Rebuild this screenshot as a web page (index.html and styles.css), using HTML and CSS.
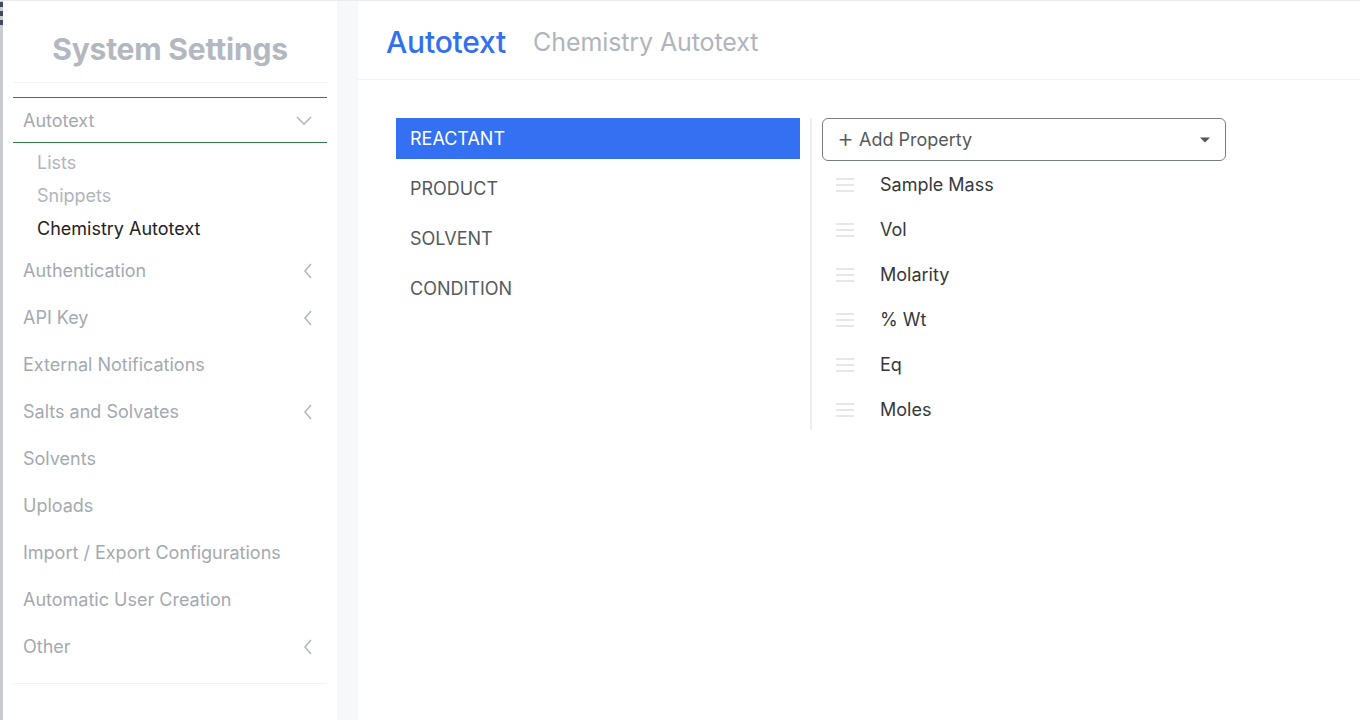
FILE: index.html
```html
<!DOCTYPE html>
<html>
<head>
<meta charset="utf-8">
<link rel="stylesheet" href="styles.css">
</head>
<body>
<div class="app">
  <div class="edge"><span></span><span></span><span></span></div>
  <aside class="sidebar">
    <h1 class="title">System Settings</h1>
    <div class="sep"></div>
    <nav class="nav">
      <div class="group open">
        <div class="item head">Autotext
          <svg class="chev" width="18" height="18" viewBox="0 0 18 18"><path d="M2 6l7 7 7-7" fill="none" stroke="#b4b8bf" stroke-width="1.6"/></svg>
        </div>
        <div class="subs">
          <div class="sub">Lists</div>
          <div class="sub">Snippets</div>
          <div class="sub active">Chemistry Autotext</div>
        </div>
      </div>
      <div class="item">Authentication<svg class="chev" width="14" height="18" viewBox="0 0 14 18"><path d="M10 2L4 9l6 7" fill="none" stroke="#b4b8bf" stroke-width="1.6"/></svg></div>
      <div class="item">API Key<svg class="chev" width="14" height="18" viewBox="0 0 14 18"><path d="M10 2L4 9l6 7" fill="none" stroke="#b4b8bf" stroke-width="1.6"/></svg></div>
      <div class="item">External Notifications</div>
      <div class="item">Salts and Solvates<svg class="chev" width="14" height="18" viewBox="0 0 14 18"><path d="M10 2L4 9l6 7" fill="none" stroke="#b4b8bf" stroke-width="1.6"/></svg></div>
      <div class="item">Solvents</div>
      <div class="item">Uploads</div>
      <div class="item">Import / Export Configurations</div>
      <div class="item">Automatic User Creation</div>
      <div class="item">Other<svg class="chev" width="14" height="18" viewBox="0 0 14 18"><path d="M10 2L4 9l6 7" fill="none" stroke="#b4b8bf" stroke-width="1.6"/></svg></div>
    </nav>
    <div class="sep bottom"></div>
  </aside>
  <div class="gap"></div>
  <main class="main">
    <header class="header">
      <span class="h-main">Autotext</span>
      <span class="h-sub">Chemistry Autotext</span>
    </header>
    <section class="content">
      <ul class="types">
        <li class="type active">REACTANT</li>
        <li class="type">PRODUCT</li>
        <li class="type">SOLVENT</li>
        <li class="type">CONDITION</li>
      </ul>
      <div class="divider"></div>
      <div class="props">
        <div class="select">
          <span class="plus">+</span><span class="sel-text">Add Property</span>
          <svg class="caret" width="12" height="8" viewBox="0 0 12 8"><path d="M1 1.5h10L6 6.5z" fill="#555"/></svg>
        </div>
        <ul class="plist">
          <li class="prop"><span class="handle"><i></i><i></i><i></i></span>Sample Mass</li>
          <li class="prop"><span class="handle"><i></i><i></i><i></i></span>Vol</li>
          <li class="prop"><span class="handle"><i></i><i></i><i></i></span>Molarity</li>
          <li class="prop"><span class="handle"><i></i><i></i><i></i></span>% Wt</li>
          <li class="prop"><span class="handle"><i></i><i></i><i></i></span>Eq</li>
          <li class="prop"><span class="handle"><i></i><i></i><i></i></span>Moles</li>
        </ul>
      </div>
    </section>
  </main>
</div>
</body>
</html>
```
FILE: styles.css
```css
* { box-sizing: border-box; }
html, body { margin: 0; padding: 0; }
body {
  font-family: Inter, "Noto Sans", "Liberation Sans", sans-serif;
  background: #f7f8fa;
  width: 1360px;
  height: 720px;
  overflow: hidden;
}
ul { list-style: none; margin: 0; padding: 0; }
.app {
  display: flex;
  height: 720px;
  border-top: 1px solid #e9ebef;
}
.edge {
  width: 3px;
  background: #c9cbcf;
  display: flex;
  flex-direction: column;
  gap: 4px;
  padding-top: 1px;
}
.edge span { display: block; height: 5px; background: #3f4a5e; }
.sidebar {
  width: 334px;
  background: #fff;
  padding: 0 10px;
  display: flex;
  flex-direction: column;
}
.title {
  margin: 0;
  text-align: center;
  font-size: 30px;
  font-weight: 700;
  color: #b3b8c0;
  height: 81px;
  line-height: 96px;
  letter-spacing: -0.2px;
}
.sep { height: 1px; background: #f1f2f4; }
.sep.bottom { margin-top: 13px; }
.nav { padding-top: 14px; }
.item {
  height: 47px;
  display: flex;
  align-items: center;
  justify-content: space-between;
  padding: 0 10px;
  font-size: 18px;
  color: #a4a9b1;
}
.item .chev { margin-right: 2px; }
.group.open .head {
  border-top: 1.5px solid #2e7d45;
  border-bottom: 1.5px solid #2e7d45;
  height: 46px;
  padding-right: 12px;
}
.subs { padding: 3px 0 2px; }
.sub {
  height: 33px;
  display: flex;
  align-items: center;
  padding-left: 24px;
  font-size: 18px;
  color: #b0b5bc;
}
.sub.active { color: #1f2125; }
.gap { width: 21px; }
.main {
  flex: 1;
  background: #fff;
  display: flex;
  flex-direction: column;
}
.header {
  height: 79px;
  border-bottom: 1px solid #f2f3f5;
  display: flex;
  align-items: center;
  padding-left: 28px;
  gap: 27px;
  padding-top: 3px;
}
.h-main { font-size: 30px; color: #3270ee; font-weight: 500; letter-spacing: -0.2px; }
.h-sub { font-size: 25px; color: #b0b5bc; letter-spacing: -0.1px; }
.content {
  display: flex;
  padding: 38px 0 0 38px;
}
.types { width: 404px; }
.type {
  height: 50px;
  display: flex;
  align-items: center;
  padding-left: 14px;
  font-size: 18px;
  color: #555a60;
}
.type.active {
  height: 41px;
  background: #3370f2;
  color: #fff;
  margin-bottom: 4px;
}
.divider {
  width: 2px;
  background: #eceef2;
  height: 312px;
  margin-left: 10px;
}
.props { margin-left: 10px; }
.select {
  width: 404px;
  height: 43px;
  border: 1.5px solid #7a7d82;
  border-radius: 6px;
  display: flex;
  align-items: center;
  padding: 0 14px 0 14px;
  font-size: 18px;
  color: #55595f;
}
.plus { font-size: 26px; font-weight: 300; margin-right: 5px; line-height: 1; margin-top: -3px; }
.sel-text { flex: 1; }
.plist { padding-top: 1px; }
.prop {
  height: 45px;
  display: flex;
  align-items: center;
  font-size: 18px;
  color: #35383d;
  padding-left: 14px;
}
.handle {
  width: 18px;
  display: flex;
  flex-direction: column;
  gap: 4px;
  margin-right: 26px;
}
.handle i { display: block; height: 2px; background: #e6e7ea; }
```
